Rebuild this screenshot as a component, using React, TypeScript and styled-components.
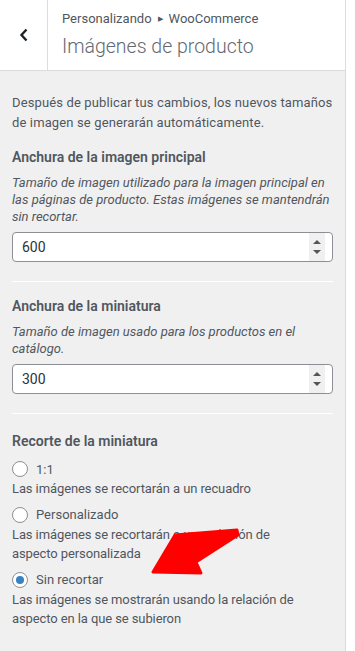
import React from 'react';
import styled, { createGlobalStyle } from 'styled-components';

const GlobalStyle = createGlobalStyle`
  body {
    margin: 0;
    background: #fff;
    font-family: Roboto, "Liberation Sans", sans-serif;
    color: #50575e;
  }
`;

const Panel = styled.div`
  position: relative;
  box-sizing: border-box;
  width: 346px;
  min-height: 651px;
  background: #f0f0f1;
  border-right: 1px solid #dcdcde;
`;

const Header = styled.div`
  display: flex;
  height: 71px;
  box-sizing: border-box;
  background: #fff;
  border-bottom: 1px solid #dcdcde;
`;

const BackButton = styled.button`
  display: flex;
  align-items: center;
  justify-content: center;
  width: 48px;
  padding: 0;
  border: none;
  border-right: 1px solid #dcdcde;
  background: #fff;
  cursor: pointer;
`;

const HeaderText = styled.div`
  display: flex;
  flex-direction: column;
  padding: 10px 0 0 14px;
`;

const Crumbs = styled.span`
  font-size: 13px;
  line-height: 18px;
  color: #50575e;
`;

const CrumbArrow = styled.span`
  display: inline-block;
  margin: 0 6px;
  font-size: 7px;
  vertical-align: 2px;
`;

const Title = styled.h1`
  margin: 6px 0 0;
  font-size: 19.5px;
  line-height: 26px;
  font-weight: 300;
  color: #646970;
`;

const Content = styled.div`
  padding: 22px 12px 20px;
`;

const Intro = styled.p`
  margin: 0;
  font-size: 13px;
  line-height: 19.5px;
  letter-spacing: 0.13px;
  color: #50575e;
`;

const Section = styled.div<{ $first?: boolean; $last?: boolean }>`
  padding-top: ${(p) => (p.$first ? '15px' : p.$last ? '17px' : '14px')};
  padding-bottom: 19px;
  border-bottom: ${(p) => (p.$last ? 'none' : '1px solid #fff')};
`;

const Label = styled.div`
  font-size: 14px;
  line-height: 20px;
  font-weight: 600;
  color: #50575e;
`;

const Hint = styled.p`
  margin: 7px 0 7px;
  font-size: 13px;
  line-height: 17px;
  font-style: italic;
  color: #50575e;
`;

const NumberBox = styled.div`
  display: flex;
  align-items: stretch;
  box-sizing: border-box;
  height: 30px;
  background: #fff;
  border: 1px solid #8c8f94;
  border-radius: 4px;
  overflow: hidden;
`;

const NumberField = styled.input`
  flex: 1;
  min-width: 0;
  border: none;
  outline: none;
  padding: 0 9px;
  font-family: inherit;
  font-size: 14px;
  color: #2c3338;
  background: transparent;
`;

const Spinner = styled.div`
  display: flex;
  flex-direction: column;
  justify-content: center;
  align-items: center;
  gap: 6px;
  width: 16px;
  margin-right: 7px;
  background: #f0f0f0;
`;

const SpinArrow = styled.span<{ $down?: boolean }>`
  width: 0;
  height: 0;
  border-left: 4px solid transparent;
  border-right: 4px solid transparent;
  ${(p) => (p.$down ? 'border-top: 4px solid #555;' : 'border-bottom: 4px solid #555;')}
`;

const RadioList = styled.div`
  display: flex;
  flex-direction: column;
  gap: 6px;
  margin-top: 8px;
`;

const RadioRow = styled.label`
  display: flex;
  align-items: center;
  gap: 8px;
  height: 20px;
  font-size: 13px;
  color: #50575e;
`;

const RadioCircle = styled.span<{ $checked?: boolean }>`
  display: flex;
  align-items: center;
  justify-content: center;
  box-sizing: border-box;
  width: 16px;
  height: 16px;
  border: 1px solid #8c8f94;
  border-radius: 50%;
  background: #fff;
  &::after {
    content: '';
    display: ${(p) => (p.$checked ? 'block' : 'none')};
    width: 8px;
    height: 8px;
    border-radius: 50%;
    background: #3582c4;
  }
`;

const RadioHint = styled.div`
  max-width: 286px;
  font-size: 13px;
  line-height: 19.5px;
  letter-spacing: -0.1px;
  color: #50575e;
`;

const Pointer = styled.svg`
  position: absolute;
  left: 148px;
  top: 526px;
`;

const NumberInput: React.FC<{ value: string }> = ({ value }) => (
  <NumberBox>
    <NumberField type="text" defaultValue={value} />
    <Spinner>
      <SpinArrow />
      <SpinArrow $down />
    </Spinner>
  </NumberBox>
);

const crops = [
  { label: '1:1', hint: 'Las imágenes se recortarán a un recuadro' },
  { label: 'Personalizado', hint: 'Las imágenes se recortarán a una relación de aspecto personalizada' },
  { label: 'Sin recortar', hint: 'Las imágenes se mostrarán usando la relación de aspecto en la que se subieron', checked: true },
];

const App: React.FC = () => {
  return (
    <>
      <GlobalStyle />
      <Panel>
        <Header>
          <BackButton aria-label="Volver">
            <svg width="10" height="14" viewBox="0 0 10 14">
              <path d="M7.5 1.5 L2.5 7 L7.5 12.5" fill="none" stroke="#1d2327" strokeWidth="2.4" />
            </svg>
          </BackButton>
          <HeaderText>
            <Crumbs>
              Personalizando<CrumbArrow>▶</CrumbArrow>WooCommerce
            </Crumbs>
            <Title>Imágenes de producto</Title>
          </HeaderText>
        </Header>
        <Content>
          <Intro>
            Después de publicar tus cambios, los nuevos tamaños de imagen se generarán automáticamente.
          </Intro>
          <Section $first>
            <Label>Anchura de la imagen principal</Label>
            <Hint>
              Tamaño de imagen utilizado para la imagen principal en las páginas de producto. Estas imágenes se
              mantendrán sin recortar.
            </Hint>
            <NumberInput value="600" />
          </Section>
          <Section>
            <Label>Anchura de la miniatura</Label>
            <Hint>Tamaño de imagen usado para los productos en el catálogo.</Hint>
            <NumberInput value="300" />
          </Section>
          <Section $last>
            <Label>Recorte de la miniatura</Label>
            <RadioList>
              {crops.map((c) => (
                <div key={c.label}>
                  <RadioRow>
                    <RadioCircle $checked={c.checked} />
                    {c.label}
                  </RadioRow>
                  <RadioHint>{c.hint}</RadioHint>
                </div>
              ))}
            </RadioList>
          </Section>
        </Content>
        <Pointer width="96" height="52" viewBox="0 0 96 52">
          <polygon
            points="89,4 27,9 5,46 53,47 48,36 90,9"
            fill="#ff0000"
            stroke="#ff0000"
            strokeWidth="3"
            strokeLinejoin="round"
          />
        </Pointer>
      </Panel>
    </>
  );
};

export default App;
